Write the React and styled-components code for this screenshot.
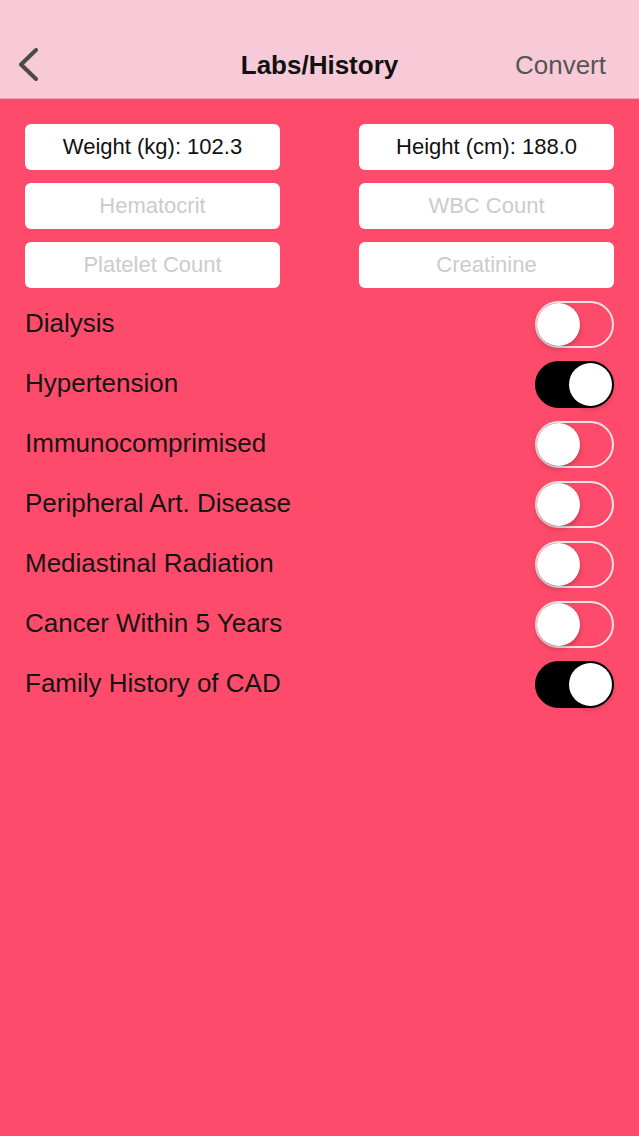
import React, { useState } from "react";
import styled, { createGlobalStyle } from "styled-components";

const GlobalStyle = createGlobalStyle`
  html, body {
    margin: 0;
    padding: 0;
    background: #ff4b6b;
    font-family: "Liberation Sans", Arial, sans-serif;
  }
`;

const Page = styled.div`
  width: 639px;
  min-height: 1136px;
  background: #ff4b6b;
`;

const NavBar = styled.header`
  height: 66px;
  padding-top: 32px;
  background: #f8cad8;
  border-bottom: 1px solid #f0a3b4;
  box-sizing: content-box;
  display: grid;
  grid-template-columns: 140px 1fr 140px;
  align-items: center;
`;

const BackButton = styled.button`
  border: none;
  background: none;
  padding: 0 0 0 17px;
  height: 40px;
  display: flex;
  align-items: center;
  cursor: pointer;
`;

const Title = styled.h1`
  margin: 0;
  text-align: center;
  font-size: 26px;
  font-weight: 700;
  color: #111;
`;

const NavAction = styled.button`
  border: none;
  background: none;
  padding: 0 33px 0 0;
  text-align: right;
  font-family: inherit;
  font-size: 26px;
  color: #555;
  white-space: nowrap;
  cursor: pointer;
`;

const Content = styled.main`
  padding: 25px 25px 0;
`;

const FieldGrid = styled.div`
  display: grid;
  grid-template-columns: 255px 255px;
  justify-content: space-between;
  row-gap: 13px;
`;

const Field = styled.input`
  height: 46px;
  box-sizing: border-box;
  border: none;
  border-radius: 6px;
  background: #fff;
  text-align: center;
  font-family: inherit;
  font-size: 22px;
  color: #111;
  outline: none;
  &::placeholder {
    color: #cbcbd0;
  }
`;

const ToggleList = styled.div`
  margin-top: 13px;
  display: flex;
  flex-direction: column;
  gap: 13px;
`;

const ToggleRow = styled.label`
  height: 47px;
  display: flex;
  align-items: center;
  justify-content: space-between;
  cursor: pointer;
`;

const RowLabel = styled.span`
  font-size: 26px;
  color: #141414;
  margin-top: -3px;
`;

const Track = styled.span`
  position: relative;
  width: 79px;
  height: 47px;
  box-sizing: border-box;
  border-radius: 24px;
  border: 2px solid ${(p) => (p.$on ? "#000" : "#f1e4e7")};
  background: ${(p) => (p.$on ? "#000" : "transparent")};
  flex-shrink: 0;
`;

const Knob = styled.span`
  position: absolute;
  top: 0;
  left: ${(p) => (p.$on ? "32px" : "0")};
  width: 43px;
  height: 43px;
  border-radius: 50%;
  background: #fff;
  box-shadow: 0 3px 6px rgba(0, 0, 0, 0.22), 0 0 1px rgba(0, 0, 0, 0.2);
`;

const fields = [
  { placeholder: "Weight (kg)", value: "Weight (kg): 102.3" },
  { placeholder: "Height (cm)", value: "Height (cm): 188.0" },
  { placeholder: "Hematocrit", value: "" },
  { placeholder: "WBC Count", value: "" },
  { placeholder: "Platelet Count", value: "" },
  { placeholder: "Creatinine", value: "" },
];

const initialToggles = [
  { label: "Dialysis", on: false },
  { label: "Hypertension", on: true },
  { label: "Immunocomprimised", on: false },
  { label: "Peripheral Art. Disease", on: false },
  { label: "Mediastinal Radiation", on: false },
  { label: "Cancer Within 5 Years", on: false },
  { label: "Family History of CAD", on: true },
];

const Switch = ({ on, onClick }) => (
  <Track $on={on} onClick={onClick}>
    <Knob $on={on} />
  </Track>
);

const App = () => {
  const [values, setValues] = useState(fields.map((f) => f.value));
  const [toggles, setToggles] = useState(initialToggles);

  const flip = (index) => {
    setToggles(toggles.map((t, i) => (i === index ? { ...t, on: !t.on } : t)));
  };

  return (
    <Page>
      <GlobalStyle />
      <NavBar>
        <BackButton aria-label="Back">
          <svg width="24" height="34" viewBox="0 0 24 34">
            <path
              d="M19 2 L4 16.5 L19 31"
              fill="none"
              stroke="#4a4a4a"
              strokeWidth="4"
              strokeLinecap="round"
              strokeLinejoin="round"
            />
          </svg>
        </BackButton>
        <Title>Labs/History</Title>
        <NavAction>Convert</NavAction>
      </NavBar>
      <Content>
        <FieldGrid>
          {fields.map((f, i) => (
            <Field
              key={f.placeholder}
              placeholder={f.placeholder}
              value={values[i]}
              onChange={(e) =>
                setValues(values.map((v, j) => (j === i ? e.target.value : v)))
              }
            />
          ))}
        </FieldGrid>
        <ToggleList>
          {toggles.map((t, i) => (
            <ToggleRow key={t.label}>
              <RowLabel>{t.label}</RowLabel>
              <Switch on={t.on} onClick={() => flip(i)} />
            </ToggleRow>
          ))}
        </ToggleList>
      </Content>
    </Page>
  );
};

export default App;
